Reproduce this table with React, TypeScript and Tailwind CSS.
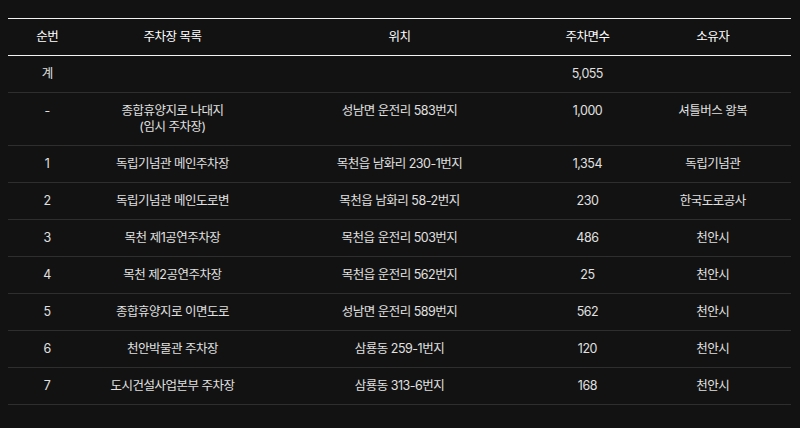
import React from 'react';

type Row = { no: string; name: React.ReactNode; location: string; count: string; owner: string };

const ROWS: Row[] = [
  { no: '계', name: '', location: '', count: '5,055', owner: '' },
  {
    no: '-',
    name: (
      <>
        종합휴양지로 나대지
        <br />
        (임시 주차장)
      </>
    ),
    location: '성남면 운전리 583번지',
    count: '1,000',
    owner: '셔틀버스 왕복',
  },
  { no: '1', name: '독립기념관 메인주차장', location: '목천읍 남화리 230-1번지', count: '1,354', owner: '독립기념관' },
  { no: '2', name: '독립기념관 메인도로변', location: '목천읍 남화리 58-2번지', count: '230', owner: '한국도로공사' },
  { no: '3', name: '목천 제1공연주차장', location: '목천읍 운전리 503번지', count: '486', owner: '천안시' },
  { no: '4', name: '목천 제2공연주차장', location: '목천읍 운전리 562번지', count: '25', owner: '천안시' },
  { no: '5', name: '종합휴양지로 이면도로', location: '성남면 운전리 589번지', count: '562', owner: '천안시' },
  { no: '6', name: '천안박물관 주차장', location: '삼룡동 259-1번지', count: '120', owner: '천안시' },
  { no: '7', name: '도시건설사업본부 주차장', location: '삼룡동 313-6번지', count: '168', owner: '천안시' },
];

const HEADERS = ['순번', '주차장 목록', '위치', '주차면수', '소유자'];

export default function App() {
  return (
    <div
      className="min-h-[428px] w-full bg-[#121212] px-2 pt-[18px]"
      style={{ fontFamily: 'Inter, "Noto Sans CJK KR", sans-serif' }}
    >
      <table className="w-[783px] table-fixed border-collapse text-center text-[12.5px] leading-[16px] tracking-[-0.04em]">
        <colgroup>
          <col className="w-[10%]" />
          <col className="w-[22%]" />
          <col className="w-[36%]" />
          <col className="w-[12%]" />
          <col className="w-[20%]" />
        </colgroup>
        <thead>
          <tr className="border-y border-[#f2f2f2]">
            {HEADERS.map((h) => (
              <th key={h} className="py-[10px] font-normal text-white">
                {h}
              </th>
            ))}
          </tr>
        </thead>
        <tbody>
          {ROWS.map((r, i) => (
            <tr key={i} className="border-b border-[#2e2e2e] text-[#e0e0e0]">
              <td className="py-[10px] align-top">{r.no}</td>
              <td className="py-[10px] align-top">{r.name}</td>
              <td className="py-[10px] align-top">{r.location}</td>
              <td className="py-[10px] align-top">{r.count}</td>
              <td className="py-[10px] align-top">{r.owner}</td>
            </tr>
          ))}
        </tbody>
      </table>
    </div>
  );
}
